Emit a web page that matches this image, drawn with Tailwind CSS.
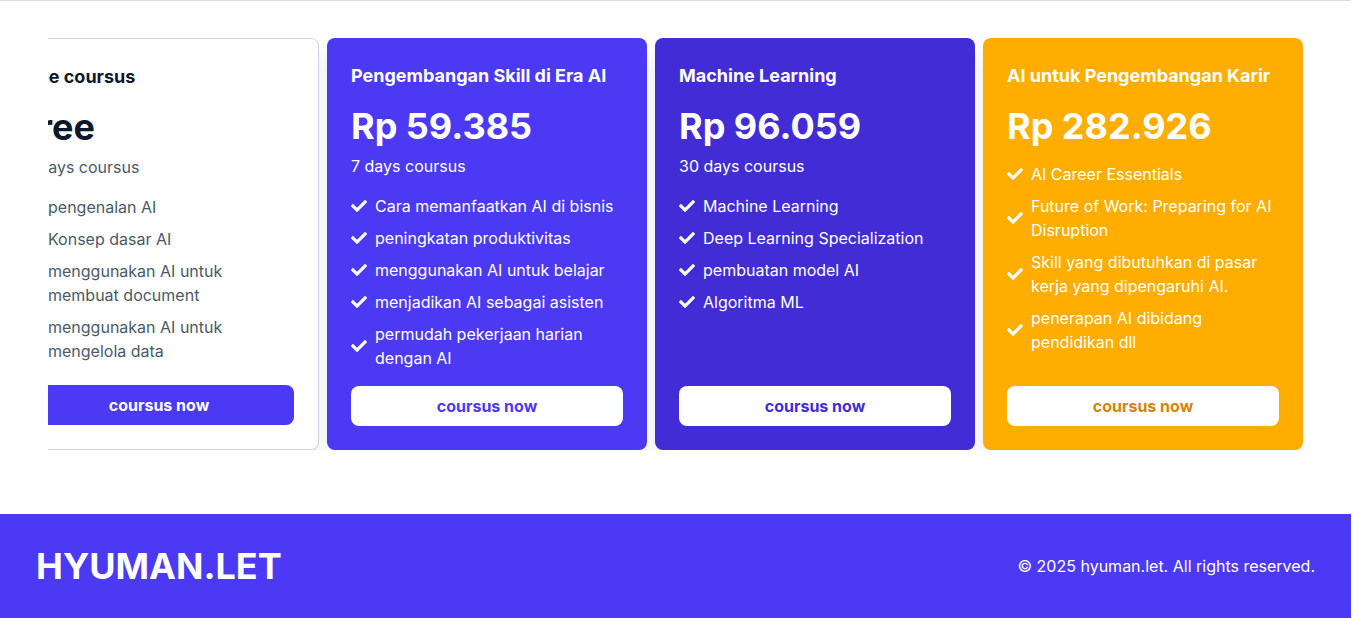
<!DOCTYPE html>
<html lang="id">
<head>
<meta charset="utf-8">
<meta name="viewport" content="width=device-width, initial-scale=1">
<title>HYUMAN.LET</title>
<script src="https://cdn.jsdelivr.net/npm/@tailwindcss/browser@4"></script>
</head>
<body class="bg-white pr-0.5 font-['Inter',sans-serif] text-base text-slate-900">
<svg class="hidden" aria-hidden="true">
  <symbol id="check" viewBox="0 0 512 512"><path fill="currentColor" d="M173.898 439.404l-166.4-166.4c-9.997-9.997-9.997-26.206 0-36.204l36.203-36.204c9.997-9.998 26.207-9.998 36.204 0L192 312.69 432.095 72.596c9.997-9.997 26.207-9.997 36.204 0l36.203 36.204c9.997 9.997 9.997 26.206 0 36.204l-294.4 294.401c-9.998 9.997-26.207 9.997-36.204-.001z"/></symbol>
</svg>
<main class="border-t border-[#d5dfe0] px-12 pt-[37px] pb-16">
  <section class="flex justify-end gap-2 overflow-hidden" aria-label="Coursus">

    <article class="flex w-80 shrink-0 flex-col rounded-lg border border-slate-300 bg-white p-6 shadow-lg">
      <h2 class="text-lg font-bold">free coursus</h2>
      <p class="mt-4 text-4xl font-bold">free</p>
      <p class="mt-2 text-[#4a5a68]">3 days coursus</p>
      <ul class="mt-4 mb-4 flex flex-col gap-2 text-[#4a5a68]">
        <li class="flex items-center gap-2"><svg class="size-4 shrink-0"><use href="#check"/></svg>pengenalan AI</li>
        <li class="flex items-center gap-2"><svg class="size-4 shrink-0"><use href="#check"/></svg>Konsep dasar AI</li>
        <li class="flex items-center gap-2 pr-12"><svg class="size-4 shrink-0"><use href="#check"/></svg>menggunakan AI untuk membuat document</li>
        <li class="flex items-center gap-2 pr-12"><svg class="size-4 shrink-0"><use href="#check"/></svg>menggunakan AI untuk mengelola data</li>
      </ul>
      <button type="button" class="mt-auto w-full rounded-lg bg-[#4c39f3] py-2 font-bold text-white">coursus now</button>
    </article>

    <article class="flex w-80 shrink-0 flex-col rounded-lg bg-[#4c39f3] p-6 text-white shadow-lg">
      <h2 class="text-lg font-bold">Pengembangan Skill di Era AI</h2>
      <p class="mt-4 text-4xl font-bold">Rp 59.385</p>
      <p class="mt-2">7 days coursus</p>
      <ul class="mt-4 mb-4 flex flex-col gap-2">
        <li class="flex items-center gap-2"><svg class="size-4 shrink-0"><use href="#check"/></svg>Cara memanfaatkan AI di bisnis</li>
        <li class="flex items-center gap-2"><svg class="size-4 shrink-0"><use href="#check"/></svg>peningkatan produktivitas</li>
        <li class="flex items-center gap-2"><svg class="size-4 shrink-0"><use href="#check"/></svg>menggunakan AI untuk belajar</li>
        <li class="flex items-center gap-2"><svg class="size-4 shrink-0"><use href="#check"/></svg>menjadikan AI sebagai asisten</li>
        <li class="flex items-center gap-2"><svg class="size-4 shrink-0"><use href="#check"/></svg>permudah pekerjaan harian dengan AI</li>
      </ul>
      <button type="button" class="mt-auto w-full rounded-lg bg-white py-2 font-bold text-[#4c39f3]">coursus now</button>
    </article>

    <article class="flex w-80 shrink-0 flex-col rounded-lg bg-[#412cd6] p-6 text-white shadow-lg">
      <h2 class="text-lg font-bold">Machine Learning</h2>
      <p class="mt-4 text-4xl font-bold">Rp 96.059</p>
      <p class="mt-2">30 days coursus</p>
      <ul class="mt-4 mb-4 flex flex-col gap-2">
        <li class="flex items-center gap-2"><svg class="size-4 shrink-0"><use href="#check"/></svg>Machine Learning</li>
        <li class="flex items-center gap-2"><svg class="size-4 shrink-0"><use href="#check"/></svg>Deep Learning Specialization</li>
        <li class="flex items-center gap-2"><svg class="size-4 shrink-0"><use href="#check"/></svg>pembuatan model AI</li>
        <li class="flex items-center gap-2"><svg class="size-4 shrink-0"><use href="#check"/></svg>Algoritma ML</li>
      </ul>
      <button type="button" class="mt-auto w-full rounded-lg bg-white py-2 font-bold text-[#412cd6]">coursus now</button>
    </article>

    <article class="flex w-80 shrink-0 flex-col rounded-lg bg-[#ffad00] p-6 text-white shadow-lg">
      <h2 class="text-lg font-bold">AI untuk Pengembangan Karir</h2>
      <p class="mt-4 text-4xl font-bold">Rp 282.926</p>
      <ul class="mt-4 mb-4 flex flex-col gap-2">
        <li class="flex items-center gap-2"><svg class="size-4 shrink-0"><use href="#check"/></svg>AI Career Essentials</li>
        <li class="flex items-center gap-2"><svg class="size-4 shrink-0"><use href="#check"/></svg>Future of Work: Preparing for AI Disruption</li>
        <li class="flex items-center gap-2"><svg class="size-4 shrink-0"><use href="#check"/></svg>Skill yang dibutuhkan di pasar kerja yang dipengaruhi AI.</li>
        <li class="flex items-center gap-2"><svg class="size-4 shrink-0"><use href="#check"/></svg>penerapan AI dibidang pendidikan dll</li>
      </ul>
      <button type="button" class="mt-auto w-full rounded-lg bg-white py-2 font-bold text-[#d48408]">coursus now</button>
    </article>
  </section>
</main>
<footer class="flex items-center justify-between bg-[#4c39f3] px-9 py-8 text-white">
  <p class="text-4xl font-bold">HYUMAN.LET</p>
  <p>© 2025 hyuman.let. All rights reserved.</p>
</footer>
</body>
</html>
